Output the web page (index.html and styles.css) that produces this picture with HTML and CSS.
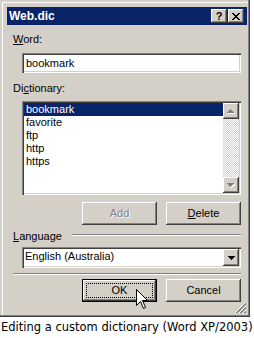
FILE: index.html
```html
<!DOCTYPE html>
<html>
<head>
<meta charset="utf-8">
<link rel="stylesheet" href="styles.css">
</head>
<body>
<div class="page">
  <div class="dialog">
    <div class="titlebar">
      <span class="title">Web.dic</span>
      <div class="tbtns">
        <span class="tbtn help">?</span>
        <span class="tbtn close">
          <svg width="8" height="7" viewBox="0 0 8 7" shape-rendering="crispEdges">
            <rect x="0" y="0" width="2" height="1"/><rect x="6" y="0" width="2" height="1"/>
            <rect x="1" y="1" width="2" height="1"/><rect x="5" y="1" width="2" height="1"/>
            <rect x="2" y="2" width="4" height="1"/>
            <rect x="3" y="3" width="2" height="1"/>
            <rect x="2" y="4" width="4" height="1"/>
            <rect x="1" y="5" width="2" height="1"/><rect x="5" y="5" width="2" height="1"/>
            <rect x="0" y="6" width="2" height="1"/><rect x="6" y="6" width="2" height="1"/>
          </svg>
        </span>
      </div>
    </div>
    <div class="body">
      <div class="label lbl-word"><u>W</u>ord:</div>
      <div class="field input">bookmark</div>
      <div class="label lbl-dict">Di<u>c</u>tionary:</div>
      <div class="field list">
        <div class="items">
          <div class="item sel">bookmark</div>
          <div class="item">favorite</div>
          <div class="item">ftp</div>
          <div class="item">http</div>
          <div class="item">https</div>
        </div>
        <div class="scrollbar">
          <div class="raised sbtn">
            <svg width="8" height="5" viewBox="0 0 8 5" shape-rendering="crispEdges">
              <g fill="#fff"><rect x="4" y="1" width="1" height="1"/><rect x="3" y="2" width="3" height="1"/><rect x="2" y="3" width="5" height="1"/><rect x="1" y="4" width="7" height="1"/></g>
              <g fill="#808080"><rect x="3" y="0" width="1" height="1"/><rect x="2" y="1" width="3" height="1"/><rect x="1" y="2" width="5" height="1"/><rect x="0" y="3" width="7" height="1"/></g>
            </svg>
          </div>
          <div class="track"></div>
          <div class="raised sbtn">
            <svg width="8" height="5" viewBox="0 0 8 5" shape-rendering="crispEdges">
              <g fill="#fff"><rect x="1" y="1" width="7" height="1"/><rect x="2" y="2" width="5" height="1"/><rect x="3" y="3" width="3" height="1"/><rect x="4" y="4" width="1" height="1"/></g>
              <g fill="#808080"><rect x="0" y="0" width="7" height="1"/><rect x="1" y="1" width="5" height="1"/><rect x="2" y="2" width="3" height="1"/><rect x="3" y="3" width="1" height="1"/></g>
            </svg>
          </div>
        </div>
      </div>
      <div class="btnrow row1">
        <div class="raised btn disabled">Add</div>
        <div class="raised btn"><u>D</u>elete</div>
      </div>
      <div class="group">
        <span><u>L</u>anguage</span>
        <span class="etch"></span>
      </div>
      <div class="field combo">
        <span class="ctext">English (Australia)</span>
        <span class="raised cbtn">
          <svg width="7" height="4" viewBox="0 0 7 4" shape-rendering="crispEdges">
            <rect x="0" y="0" width="7" height="1"/><rect x="1" y="1" width="5" height="1"/><rect x="2" y="2" width="3" height="1"/><rect x="3" y="3" width="1" height="1"/>
          </svg>
        </span>
      </div>
      <div class="sep"></div>
      <div class="btnrow row2">
        <div class="btn default"><span class="focus">OK</span></div>
        <div class="raised btn">Cancel</div>
      </div>
    </div>
    <svg class="grip" width="12" height="12" viewBox="0 0 12 12" shape-rendering="crispEdges">
      <g stroke-width="1">
        <line x1="11" y1="0" x2="0" y2="11" stroke="#fff"/>
        <line x1="11" y1="1" x2="1" y2="11" stroke="#808080"/>
        <line x1="11" y1="2" x2="2" y2="11" stroke="#808080"/>
        <line x1="11" y1="4" x2="4" y2="11" stroke="#fff"/>
        <line x1="11" y1="5" x2="5" y2="11" stroke="#808080"/>
        <line x1="11" y1="6" x2="6" y2="11" stroke="#808080"/>
        <line x1="11" y1="8" x2="8" y2="11" stroke="#fff"/>
        <line x1="11" y1="9" x2="9" y2="11" stroke="#808080"/>
        <line x1="11" y1="10" x2="10" y2="11" stroke="#808080"/>
      </g>
    </svg>
    <svg class="cursor" width="13" height="21" viewBox="0 0 13 21">
      <path d="M0.5 0.5 V16.5 L4.5 12.5 L7.5 19.5 L9.5 18.5 L6.5 11.5 H11.5 Z" fill="#fff" stroke="#000" stroke-width="1" stroke-linejoin="miter"/>
    </svg>
  </div>
  <div class="caption">Editing a custom dictionary (Word XP/2003)</div>
</div>
</body>
</html>
```

FILE: styles.css
```css
body {
  margin: 0;
  background: #fff;
  font-family: "Liberation Sans", Arial, sans-serif;
  font-size: 11px;
  color: #000;
}

.page {
  width: 254px;
}

.dialog {
  position: relative;
  width: 250px;
  height: 317px;
  box-sizing: border-box;
  padding: 7px 3px 0 7px;
  background: #d4d0c8;
  box-shadow: inset -1px -1px #404040, inset -2px -2px #808080, inset 2px 2px #d4d0c8, inset 3px 3px #fff;
}

.titlebar {
  display: flex;
  align-items: flex-start;
  height: 18px;
  padding-left: 2px;
  background: #0a246a;
  color: #fff;
}

.title {
  flex: 1;
  font-weight: bold;
  font-size: 12px;
  line-height: 18px;
}

.tbtns {
  display: flex;
  gap: 1px;
  margin-top: 2px;
  margin-right: 3px;
}

.tbtn {
  width: 16px;
  height: 14px;
  box-sizing: border-box;
  display: flex;
  align-items: center;
  justify-content: center;
  background: #d4d0c8;
  color: #000;
  box-shadow: inset -1px -1px #404040, inset 1px 1px #fff, inset -2px -2px #808080;
}

.tbtn.help {
  font-weight: bold;
  font-size: 11px;
  line-height: 14px;
}

.tbtn svg {
  display: block;
}

.body {
  display: flex;
  flex-direction: column;
  padding: 0 6px;
}

.label {
  height: 13px;
  line-height: 13px;
}

.lbl-word {
  margin-top: 8px;
}

.lbl-dict {
  margin-top: 9px;
}

.field {
  background: #fff;
  box-shadow: inset 1px 1px #808080, inset 2px 2px #404040, inset -1px -1px #fff, inset -2px -2px #d4d0c8;
}

.raised {
  background: #d4d0c8;
  box-shadow: inset -1px -1px #404040, inset 1px 1px #fff, inset -2px -2px #808080;
}

.input {
  margin: 7px 0 0 9px;
  height: 20px;
  box-sizing: border-box;
  padding: 4px 2px 0 4px;
  line-height: 13px;
}

.list {
  margin: 6px 0 0 9px;
  height: 94px;
  box-sizing: border-box;
  padding: 2px;
  display: flex;
}

.items {
  flex: 1;
}

.item {
  height: 13px;
  line-height: 13px;
  padding-left: 2px;
}

.item.sel {
  background: #0a246a;
  color: #fff;
}

.scrollbar {
  width: 16px;
  display: flex;
  flex-direction: column;
}

.sbtn {
  height: 16px;
  display: flex;
  align-items: center;
  justify-content: center;
}

.sbtn svg {
  display: block;
}

.track {
  flex: 1;
  background: repeating-conic-gradient(#d4d0c8 0 25%, #fff 0 50%) 0 0 / 2px 2px;
}

.btnrow {
  display: flex;
  justify-content: flex-end;
  gap: 9px;
}

.row1 {
  margin-top: 7px;
}

.row2 {
  margin-top: 4px;
}

.btn {
  width: 75px;
  height: 23px;
  box-sizing: border-box;
  display: flex;
  align-items: center;
  justify-content: center;
  line-height: 13px;
}

.btn.disabled {
  color: #808080;
  text-shadow: 1px 1px #fff;
}

.btn.default {
  background: #d4d0c8;
  box-shadow: inset 0 0 0 1px #000, inset -2px -2px #404040, inset 2px 2px #fff, inset -3px -3px #808080;
  padding: 4px;
}

.focus {
  flex: 1;
  align-self: stretch;
  display: flex;
  align-items: center;
  justify-content: center;
  border: 1px dotted #000;
}

.group {
  margin-top: 5px;
  display: flex;
  height: 13px;
  line-height: 13px;
}

.etch {
  margin-left: auto;
  margin-top: 4px;
  width: 169px;
  height: 2px;
  box-sizing: border-box;
  border-top: 1px solid #808080;
  border-bottom: 1px solid #fff;
}

.combo {
  margin: 4px 0 0 9px;
  height: 21px;
  box-sizing: border-box;
  padding: 2px;
  display: flex;
}

.ctext {
  flex: 1;
  padding: 1px 0 0 1px;
  line-height: 13px;
}

.cbtn {
  width: 16px;
  display: flex;
  align-items: center;
  justify-content: center;
}

.cbtn svg {
  display: block;
}

.sep {
  margin-top: 5px;
  height: 2px;
  box-sizing: border-box;
  border-top: 1px solid #808080;
  border-bottom: 1px solid #fff;
}

.grip {
  position: absolute;
  right: 3px;
  bottom: 3px;
}

.cursor {
  position: absolute;
  left: 136px;
  top: 289px;
}

.caption {
  margin-top: 3px;
  padding-left: 1px;
  font-family: "DejaVu Sans", sans-serif;
  font-size: 11.5px;
  line-height: 14px;
  white-space: nowrap;
}
```
